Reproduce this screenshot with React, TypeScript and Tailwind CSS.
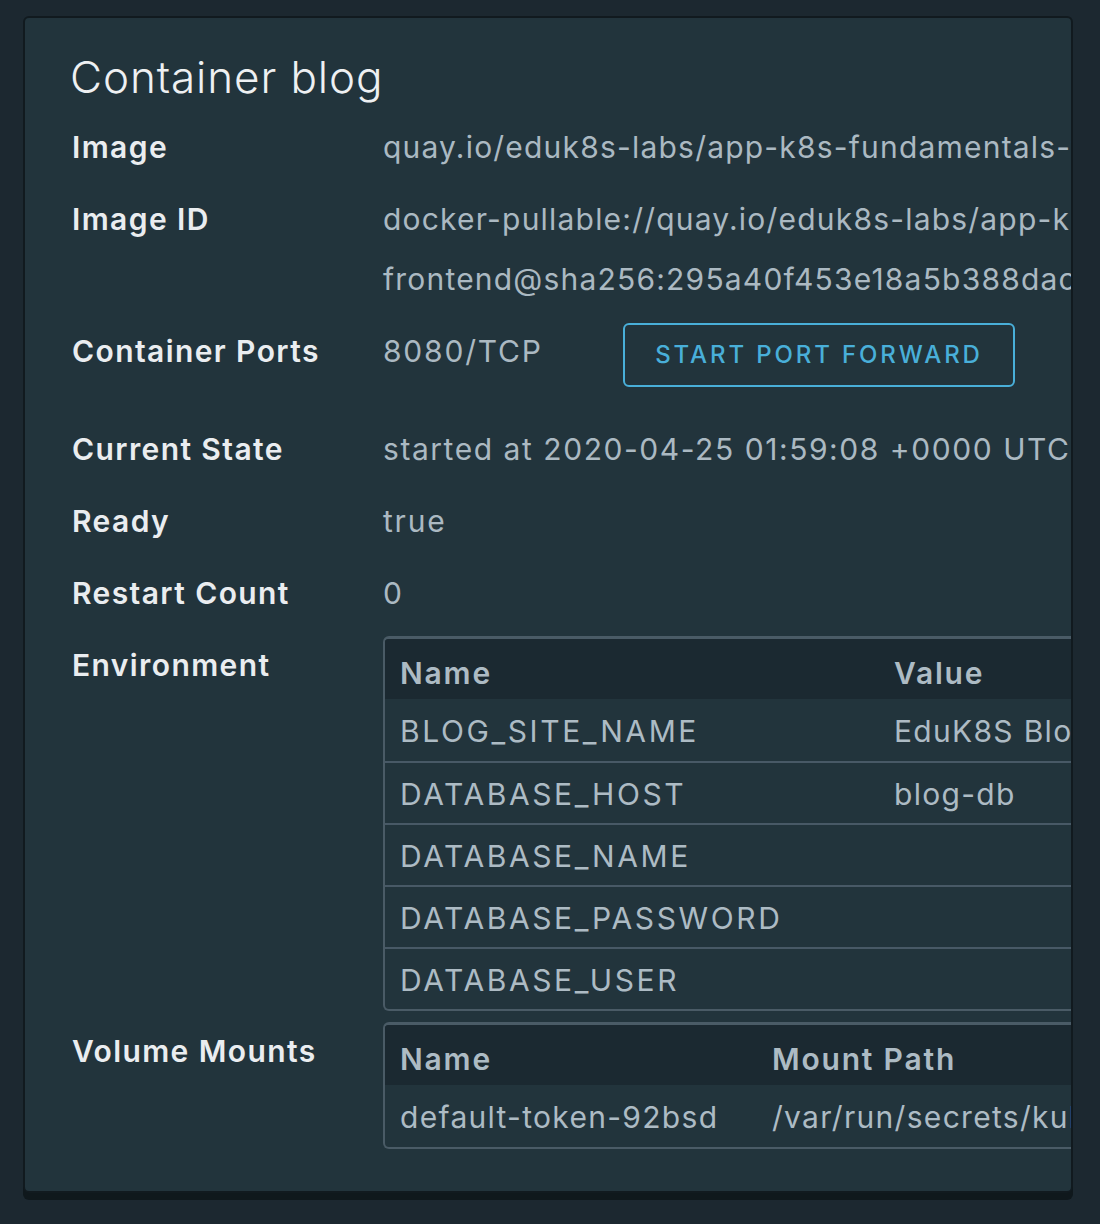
const font = { fontFamily: 'Inter, "Open Sans", sans-serif' };

const envRows = [
  ['BLOG_SITE_NAME', 'EduK8S Blog'],
  ['DATABASE_HOST', 'blog-db'],
  ['DATABASE_NAME', ''],
  ['DATABASE_PASSWORD', ''],
  ['DATABASE_USER', ''],
];

const mounts = [['default-token-92bsd', '/var/run/secrets/kubernetes.io/serviceaccount']];

function Label({ children }: { children: React.ReactNode }) {
  return (
    <div className="w-[311px] shrink-0 text-[30px] leading-[60px] font-semibold tracking-[1.4px] text-[#eaedf0]">
      {children}
    </div>
  );
}

function Table({
  cols,
  rows,
  firstWidth,
  nameTracking,
}: {
  cols: string[];
  rows: string[][];
  firstWidth: string;
  nameTracking: string;
}) {
  return (
    <div className="mt-[1px] w-[900px] shrink-0 overflow-hidden rounded-tl-[6px] rounded-bl-[6px] border-t-[3px] border-b-2 border-l-2 border-[#4a5b66]">
      <div className="flex h-[60px] items-center bg-[#1b2931] pt-[8px] text-[30px] font-semibold tracking-[1.8px] text-[#adbbc4]">
        <div className={`${firstWidth} shrink-0 pl-[15px]`}>{cols[0]}</div>
        <div className="whitespace-nowrap">{cols[1]}</div>
      </div>
      {rows.map((r, i) => (
        <div
          key={r[0]}
          className={`flex h-[62px] items-center pt-[3px] text-[30px] text-[#adbbc4] whitespace-nowrap ${
            i > 0 ? 'border-t-2 border-[#485966]' : ''
          }`}
        >
          <div className={`${firstWidth} ${nameTracking} shrink-0 pl-[15px]`}>{r[0]}</div>
          <div className="tracking-[1.3px]">{r[1]}</div>
        </div>
      ))}
    </div>
  );
}

export default function App() {
  return (
    <div className="min-h-[1224px] bg-[#1c2830] pt-[16px] pl-[23px]" style={font}>
      <div className="w-[1050px] overflow-hidden rounded-[6px] border-2 border-[#111a1f] bg-[#22343c] pt-[31px] pb-[36px] pl-[47px] shadow-[0_7px_0_#0f181c]">
        <h1 className="-ml-[2px] text-[44px] leading-[56px] font-light tracking-[0.9px] text-[#eef0f2]">
          Container blog
        </h1>
        <div className="mt-[6px] text-[30px] tracking-[1.2px] text-[#abb9c2]">
          <div className="flex py-[6px]">
            <Label>Image</Label>
            <div className="leading-[60px] whitespace-nowrap">
              quay.io/eduk8s-labs/app-k8s-fundamentals-frontend:master
            </div>
          </div>
          <div className="flex py-[6px]">
            <Label>Image ID</Label>
            <div className="leading-[60px] whitespace-nowrap">
              <div>docker-pullable://quay.io/eduk8s-labs/app-k8s-fundamentals-</div>
              <div>frontend@sha256:295a40f453e18a5b388dac4c1a3e2</div>
            </div>
          </div>
          <div className="flex pt-[6px] pb-[26px]">
            <Label>Container Ports</Label>
            <div className="flex items-start">
              <div className="w-[240px] leading-[60px] tracking-[1.8px]">8080/TCP</div>
              <button className="mt-[2px] h-[64px] w-[392px] rounded-[6px] border-2 border-[#49afd9] text-[24px] font-medium tracking-[0.12em] text-[#49afd9]">
                START PORT FORWARD
              </button>
            </div>
          </div>
          <div className="flex py-[6px]">
            <Label>Current State</Label>
            <div className="leading-[60px] whitespace-nowrap tracking-[1.55px]">
              started at 2020-04-25 01:59:08 +0000 UTC
            </div>
          </div>
          <div className="flex py-[6px]">
            <Label>Ready</Label>
            <div className="leading-[60px] tracking-[1.8px]">true</div>
          </div>
          <div className="flex py-[6px]">
            <Label>Restart Count</Label>
            <div className="leading-[60px] tracking-[1.8px]">0</div>
          </div>
          <div className="flex pt-[6px] pb-[4px]">
            <Label>Environment</Label>
            <Table
              cols={['Name', 'Value']}
              rows={envRows}
              firstWidth="w-[509px]"
              nameTracking="tracking-[2.6px]"
            />
          </div>
          <div className="flex py-[6px]">
            <Label>Volume Mounts</Label>
            <Table
              cols={['Name', 'Mount Path']}
              rows={mounts}
              firstWidth="w-[387px]"
              nameTracking="tracking-[1.3px]"
            />
          </div>
        </div>
      </div>
    </div>
  );
}
